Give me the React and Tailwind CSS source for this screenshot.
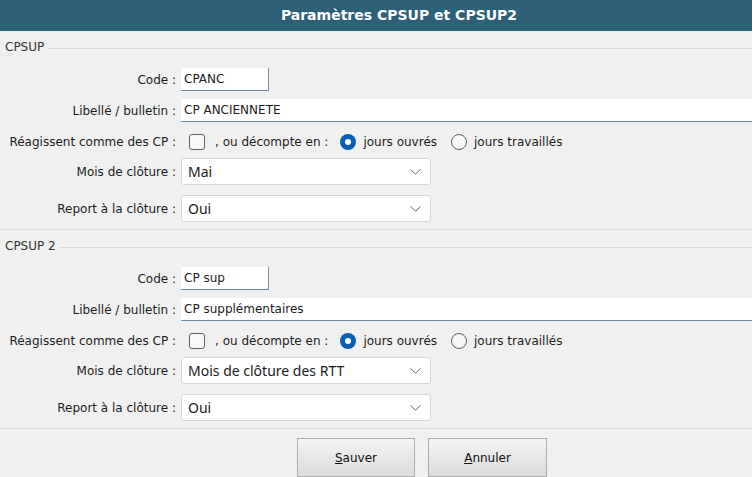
import React from 'react';

const font = { fontFamily: '"DejaVu Sans", Verdana, sans-serif' };

function Chevron() {
  return (
    <svg width="11" height="7" viewBox="0 0 11 7" className="absolute right-[9px] top-1/2 -translate-y-1/2">
      <path d="M0.5 0.8 L5.5 5.8 L10.5 0.8" fill="none" stroke="#606060" strokeWidth="1" />
    </svg>
  );
}

function Label({ children }) {
  return <span className="w-[176px] shrink-0 text-right">{children}</span>;
}

function Select({ value }) {
  return (
    <div className="relative ml-[5px] w-[250px] h-[27px] bg-white border border-[#d6d6d6] rounded-[3px] flex items-center pl-[6px] text-[14px] text-[#1a1a1a]" style={{ fontFamily: '"Noto Sans", "Open Sans", sans-serif' }}>
      {value}
      <Chevron />
    </div>
  );
}

function Radio({ checked }) {
  return checked ? (
    <span className="w-[16px] h-[16px] rounded-full bg-[#0a5fb4] flex items-center justify-center shrink-0">
      <span className="w-[6px] h-[6px] rounded-full bg-white"></span>
    </span>
  ) : (
    <span className="block w-[16px] h-[16px] rounded-full border border-[#5f5f5f] bg-[#f7f7f7] shrink-0"></span>
  );
}

function Section({ title, code, libelle, mois, report }) {
  return (
    <div className="flex flex-col border-b border-[#dcdcdc] pb-[7px]">
      {/* entête du groupe */}
      <div className="h-[32px] flex items-center pl-[5px]">
        <span className="text-[12px] text-[#333]">{title}</span>
        <span className="flex-1 h-px bg-[#dadada] ml-[4px] mt-[2px]"></span>
      </div>

      <div className="mt-[5px] flex items-center h-[23px]">
        <Label>Code :</Label>
        <div className="ml-[5px] w-[88px] h-[23px] bg-white border-r border-r-[#8a8a8a] border-b border-b-[#6f8aa6] flex items-center pl-[3px]">
          {code}
        </div>
      </div>

      <div className="mt-[8px] flex items-center h-[23px]">
        <Label>Libellé / bulletin :</Label>
        <div className="ml-[5px] flex-1 h-[23px] bg-white border-b border-b-[#6f8aa6] flex items-center pl-[3px]">
          {libelle}
        </div>
      </div>

      <div className="mt-[4px] flex items-center h-[32px]">
        <Label>Réagissent comme des CP :</Label>
        <span className="ml-[13px] w-[16px] h-[16px] rounded-[3px] border border-[#626262] bg-[#f8f8f8] shrink-0"></span>
        <span className="ml-[10px]">, ou décompte en :</span>
        <span className="ml-[12px]"><Radio checked /></span>
        <span className="ml-[7px]">jours ouvrés</span>
        <span className="ml-[14px]"><Radio /></span>
        <span className="ml-[7px]">jours travaillés</span>
      </div>

      <div className="flex items-center h-[27px]">
        <Label>Mois de clôture :</Label>
        <Select value={mois} />
      </div>

      <div className="mt-[10px] flex items-center h-[27px]">
        <Label>Report à la clôture :</Label>
        <Select value={report} />
      </div>
    </div>
  );
}

function Btn({ first, rest, w }) {
  return (
    <button className={`${w} h-[39px] border border-[#acacac] bg-gradient-to-b from-[#f3f3f3] to-[#dcdcdc] text-[12px] text-[#111] flex items-center justify-center`}>
      <span><span className="underline">{first}</span>{rest}</span>
    </button>
  );
}

export default function App() {
  return (
    <div className="w-[752px] h-[477px] bg-[#f0f0f0] text-[12px] text-[#1c1c1c] overflow-hidden flex flex-col" style={font}>
      <div className="h-[31px] shrink-0 bg-[#2d6079] flex items-center justify-center pl-[46px] text-white font-bold text-[14px]">
        Paramètres CPSUP et CPSUP2
      </div>

      <Section title="CPSUP" code="CPANC" libelle="CP ANCIENNETE" mois="Mai" report="Oui" />
      <Section title="CPSUP 2" code="CP sup" libelle="CP supplémentaires" mois="Mois de clôture des RTT" report="Oui" />

      <div className="flex justify-center gap-[13px] pt-[9px] pl-[92px]">
        <Btn first="S" rest="auver" w="w-[118px]" />
        <Btn first="A" rest="nnuler" w="w-[119px]" />
      </div>
    </div>
  );
}
